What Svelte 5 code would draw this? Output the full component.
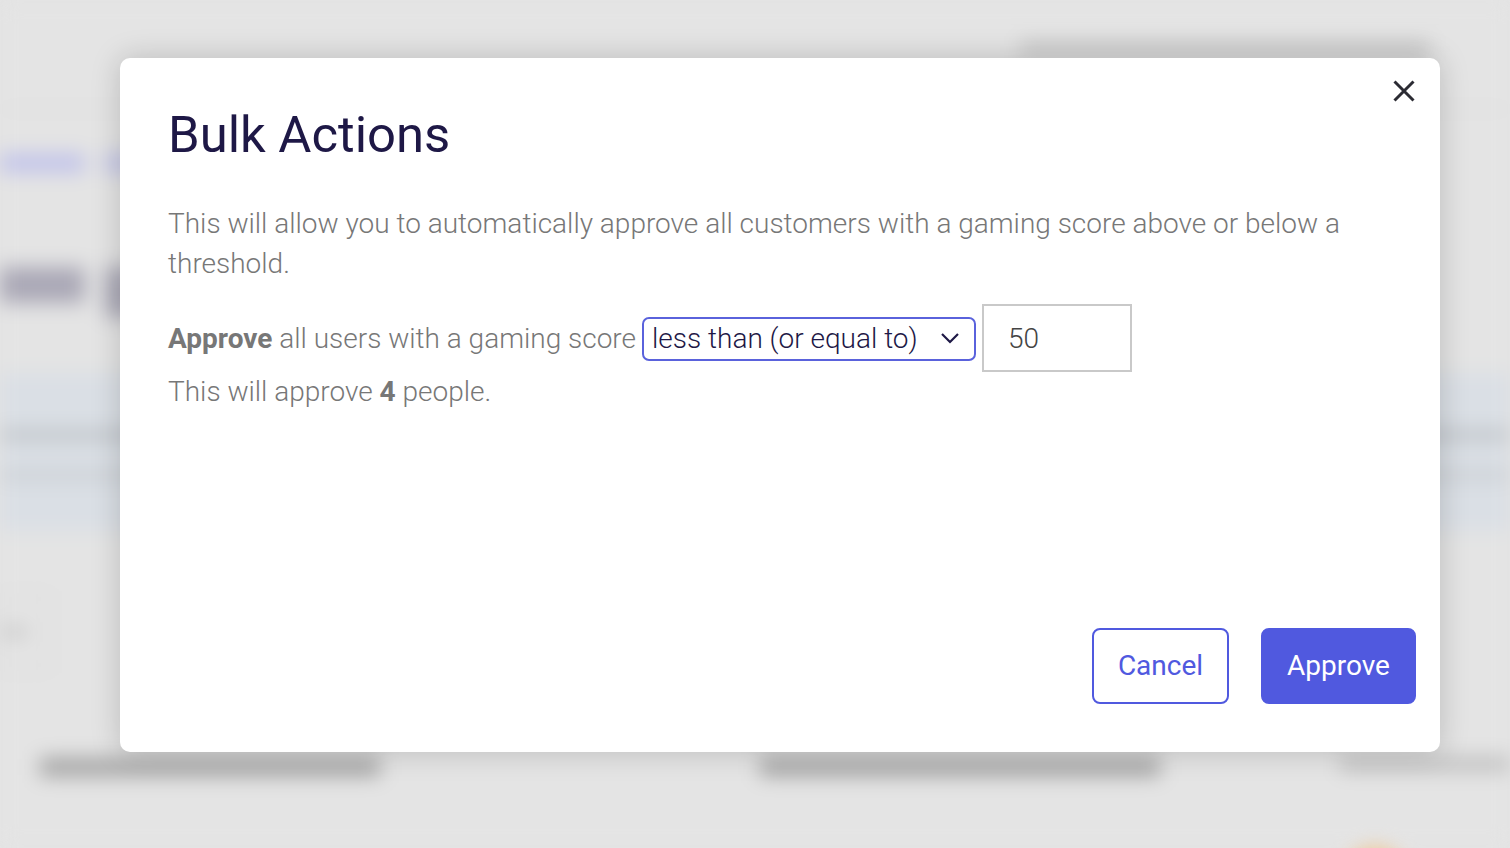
<script lang="ts">
	let comparison = $state('lte')
	let score = $state(50)
</script>

<div class="page">
	<!-- blurred app behind the dialog -->
	<div class="backdrop" aria-hidden="true">
		<div class="topbar"><span class="top-title"></span></div>
		<div class="crumbs"><span class="crumb"></span><span class="crumb short"></span></div>
		<div class="heading"><span class="word"></span><span class="word short"></span></div>
		<div class="band">
			<div class="band-line dark"></div>
			<div class="band-line"></div>
		</div>
		<div class="tile"><span></span></div>
		<div class="labels">
			<span class="label first"></span>
			<span class="label second"></span>
			<span class="label third"></span>
		</div>
		<div class="avatar-row"><span class="avatar"></span></div>
	</div>

	<div class="overlay">
		<div class="modal" role="dialog">
			<button class="close" aria-label="Close">
				<svg width="24" height="24" viewBox="0 0 24 24">
					<path d="M2.5 2.5 L21.5 21.5 M21.5 2.5 L2.5 21.5" stroke="#2b2b33" stroke-width="3" fill="none" />
				</svg>
			</button>
			<h1>Bulk Actions</h1>
			<p class="intro">This will allow you to automatically approve all customers with a gaming score above or below a threshold.</p>
			<div class="rule">
				<span><b>Approve</b> all users with a gaming score</span>
				<div class="select">
					<select bind:value={comparison}>
						<option value="lte">less than (or equal to)</option>
						<option value="gte">greater than (or equal to)</option>
					</select>
					<svg class="chevron" width="20" height="12" viewBox="0 0 20 12">
						<path d="M2 2 L10 10 L18 2" stroke="#1e1846" stroke-width="2.2" fill="none" />
					</svg>
				</div>
				<input type="text" bind:value={score} />
			</div>
			<p class="count">This will approve <b>4</b> people.</p>
			<div class="actions">
				<button class="btn outline">Cancel</button>
				<button class="btn primary">Approve</button>
			</div>
		</div>
	</div>
</div>

<style>
	:global(body) {
		margin: 0;
		background: #e4e4e4;
	}

	.page {
		position: relative;
		width: 1510px;
		height: 848px;
		overflow: hidden;
		font-family: Roboto, "Liberation Sans", sans-serif;
	}

	.backdrop {
		position: absolute;
		inset: 0;
		background: #e4e4e4;
		filter: blur(10px);
		display: flex;
		flex-direction: column;
	}
	.backdrop > div {
		flex: none;
	}

	.topbar {
		height: 110px;
		box-sizing: border-box;
		border-bottom: 2px solid #d8d8d8;
		padding: 42px 80px 0 1020px;
	}
	.top-title {
		display: block;
		height: 14px;
		background: #c4c4c4;
	}

	.crumbs {
		display: flex;
		gap: 20px;
		margin-top: 44px;
	}
	.crumb {
		width: 85px;
		height: 18px;
		background: #bfc1ea;
	}
	.crumb.short {
		width: 25px;
	}

	.heading {
		display: flex;
		gap: 20px;
		margin-top: 95px;
	}
	.word {
		width: 85px;
		height: 36px;
		background: #aaa8b6;
	}
	.word.short {
		width: 30px;
		height: 50px;
	}

	.band {
		margin-top: 56px;
		height: 158px;
		background: #dadfe5;
		padding-top: 58px;
		box-sizing: border-box;
	}
	.band-line {
		height: 8px;
		margin-top: 32px;
		background: #c6cacf;
	}
	.band-line.dark {
		margin-top: 0;
		background: #b4b8bc;
	}

	.tile {
		margin-top: 62px;
		width: 50px;
		height: 78px;
		box-sizing: border-box;
		border: 2px solid #d6d6d6;
		padding-top: 32px;
	}
	.tile span {
		display: block;
		width: 25px;
		height: 10px;
		background: #c4c4c4;
	}

	.labels {
		display: flex;
		margin-top: 87px;
		padding-left: 40px;
	}
	.label {
		height: 18px;
		background: #a2a2a2;
	}
	.first {
		width: 340px;
	}
	.second {
		width: 400px;
		margin-left: 380px;
	}
	.third {
		width: 170px;
		margin-left: 180px;
		height: 12px;
		background: #b8b8b8;
	}

	.avatar-row {
		display: flex;
		justify-content: flex-end;
		padding-right: 105px;
		margin-top: 72px;
	}
	.avatar {
		width: 60px;
		height: 60px;
		border-radius: 50%;
		background: #f0c58c;
	}

	.overlay {
		position: absolute;
		inset: 0;
		box-sizing: border-box;
		padding: 58px 70px 96px 120px;
		display: flex;
	}

	.modal {
		position: relative;
		flex: 1;
		display: flex;
		flex-direction: column;
		box-sizing: border-box;
		padding: 45px 24px 48px 48px;
		background: #fff;
		border-radius: 10px;
		box-shadow: 0 0 30px rgba(0, 0, 0, 0.18);
		font-weight: 300;
		font-size: 28px;
		color: #777;
	}

	.close {
		position: absolute;
		top: 21px;
		right: 24px;
		width: 24px;
		height: 24px;
		padding: 0;
		border: 0;
		background: none;
	}

	h1 {
		margin: 0;
		font-size: 50.8px;
		line-height: 64px;
		font-weight: 400;
		color: #1e1846;
	}

	p {
		margin: 0;
	}

	.intro {
		margin-top: 37px;
		line-height: 40px;
		padding-right: 60px;
	}

	.rule {
		display: flex;
		align-items: center;
		gap: 6px;
		margin-top: 20px;
		height: 68px;
	}

	b {
		font-weight: 700;
	}

	.select {
		position: relative;
		width: 334px;
		height: 44px;
		margin-top: 2px;
		box-sizing: border-box;
		border: 2px solid #5a62dc;
		border-radius: 7px;
	}
	select {
		appearance: none;
		width: 100%;
		height: 100%;
		padding: 0 0 2px 8px;
		border: 0;
		background: none;
		outline: none;
		font: inherit;
		font-weight: 300;
		color: #1e1846;
	}
	.chevron {
		position: absolute;
		top: 13px;
		right: 14px;
		pointer-events: none;
	}

	input {
		width: 150px;
		height: 68px;
		box-sizing: border-box;
		border: 2px solid #c9c9c9;
		padding: 0 0 0 24px;
		outline: none;
		font: inherit;
		font-weight: 300;
		color: #444;
	}

	.count {
		margin-top: 1px;
		line-height: 38px;
	}

	.actions {
		margin-top: auto;
		display: flex;
		justify-content: flex-end;
		gap: 32px;
	}

	.btn {
		height: 76px;
		box-sizing: border-box;
		padding-bottom: 3px;
		border-radius: 8px;
		border: 2px solid #5059df;
		font-family: inherit;
		font-size: 28px;
		font-weight: 400;
	}
	.outline {
		width: 137px;
		background: #fff;
		color: #5059df;
	}
	.primary {
		width: 155px;
		background: #5059df;
		color: #fff;
	}
</style>
